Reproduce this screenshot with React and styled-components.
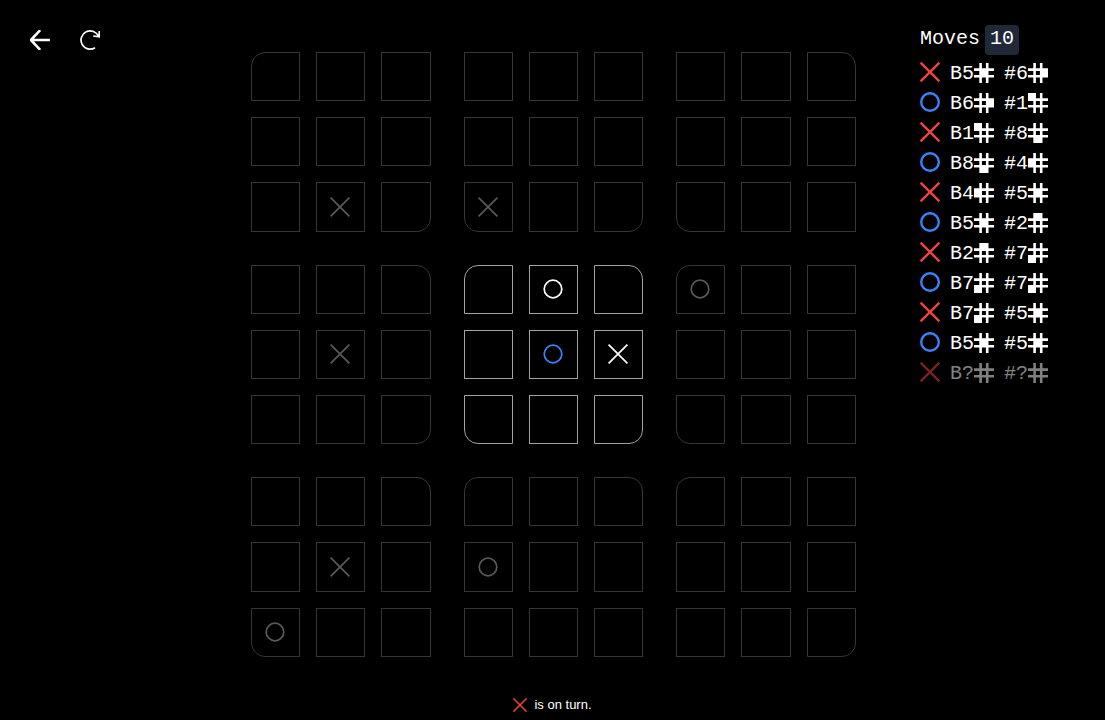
import React from "react";
import styled, { createGlobalStyle } from "styled-components";

const GlobalStyle = createGlobalStyle`
    * {
        box-sizing: border-box;
    }

    body {
        margin: 0;
        background: #000;
        color: #fff;
        font-family: "Liberation Sans", Arial, sans-serif;
    }
`;

const Page = styled.div`
    min-height: 100vh;
    display: grid;
    grid-template-columns: 1fr auto 1fr;
    grid-template-rows: 1fr auto;
`;

const Toolbar = styled.nav`
    display: flex;
    align-items: flex-start;
    gap: 30px;
    padding: 30px;
`;

const IconButton = styled.button`
    display: flex;
    width: 20px;
    height: 20px;
    padding: 0;
    border: 0;
    background: none;
    color: #fff;
    cursor: pointer;
`;

const Icon = styled.svg`
    display: block;
    flex: none;
    width: ${props => props.$size || 20}px;
    height: ${props => props.$size || 20}px;
    overflow: hidden;
    fill: none;
    stroke: ${props => props.$color || "currentColor"};
    stroke-width: ${props => props.$weight || 2};
`;

const BoardGrid = styled.main`
    width: 84vh;
    height: 84vh;
    margin: 52px 0 0 2px;
    display: grid;
    grid-template-columns: repeat(3, 1fr);
    grid-template-rows: repeat(3, 1fr);
    gap: 33px;
`;

const SmallBoard = styled.section`
    display: grid;
    grid-template-columns: repeat(3, 1fr);
    grid-template-rows: repeat(3, 1fr);
    gap: 16px;
    color: ${props => props.$active ? "#fff" : "#595959"};
`;

const Cell = styled.button`
    display: flex;
    align-items: center;
    justify-content: center;
    min-width: 0;
    padding: 0 1px 0 0;
    border: 1px solid ${props => props.$active ? "#a3a3a3" : "#363636"};
    border-radius: ${props => props.$radius};
    background: none;
    color: inherit;
`;

const Sidebar = styled.aside`
    justify-self: end;
    width: 185px;
    padding-top: 25px;
    font-family: "Liberation Mono", monospace;
    font-size: 20px;
    line-height: 23px;
`;

const Title = styled.h1`
    display: flex;
    gap: 5px;
    margin: 0;
    font-size: 20px;
    font-weight: normal;
    line-height: 23px;
`;

const TitleText = styled.span`
    padding-top: 2px;
`;

const Count = styled.span`
    padding: 2px 5px 5px;
    border-radius: 4px;
    background: #1f2937;
`;

const MoveList = styled.ol`
    margin: 2px 0 0;
    padding: 0;
    list-style: none;
`;

const Move = styled.li`
    display: flex;
    align-items: center;
    gap: 10px;
    height: 30px;
    opacity: ${props => props.$pending ? 0.5 : 1};
`;

const Position = styled.span`
    display: flex;
    align-items: center;
    padding-top: 2px;
`;

const Status = styled.footer`
    grid-column: 1 / -1;
    display: flex;
    align-items: center;
    justify-content: center;
    gap: 7px;
    padding-bottom: 7px;
    font-size: 13px;
    line-height: 16px;
`;

const RED = "#ef4444";
const BLUE = "#3b82f6";

// [board, cell], both counted from 1
const moves = [
    [5, 6], [6, 1], [1, 8], [8, 4], [4, 5],
    [5, 2], [2, 7], [7, 7], [7, 5], [5, 5]
];

// marks on the board, keyed by board and cell
const marks = {
    "1-8": "x",
    "2-7": "x",
    "4-5": "x",
    "5-2": "o",
    "5-5": "o",
    "5-6": "x",
    "6-1": "o",
    "7-5": "x",
    "7-7": "o",
    "8-4": "o"
};

const numbers = [1, 2, 3, 4, 5, 6, 7, 8, 9];
const activeBoard = 5;
const corners = [1, 3, 9, 7];

// the outer corners of the whole grid, and those facing the middle board
const roundCorners = {
    1: [1, 9],
    2: [7, 9],
    3: [3, 7],
    4: [3, 9],
    5: [1, 3, 7, 9],
    6: [1, 7],
    7: [3, 7],
    8: [1, 3],
    9: [1, 9]
};

const radius = (board, cell) => corners.map(corner =>
    corner === cell && roundCorners[board].includes(cell) ? "14px" : "0"
).join(" ");

const Mark = ({ type, ...rest }) => (
    <Icon viewBox="0 0 20 20" aria-hidden="true" {...rest}>
        {type === "x"
            ? <path d="M0.6 0.6 19.4 19.4M19.4 0.6 0.6 19.4" />
            : <circle cx="10" cy="10" r="8.8" />}
    </Icon>
);

const Hash = ({ cell }) => {
    const column = (cell - 1) % 3;
    const row = Math.floor((cell - 1) / 3);
    return (
        <Icon viewBox="0 0 20 20" $weight={2.6} aria-hidden="true">
            <path d="M6.6 0V20M13.2 0V20M0 6.6H20M0 13.2H20" />
            {cell && (
                <rect x={column * 6} y={row * 6} width="8" height="8" fill="currentColor" stroke="none" />
            )}
        </Icon>
    );
};

const MoveRow = ({ index, board, cell }) => {
    const type = index % 2 ? "o" : "x";
    return (
        <Move $pending={!board}>
            <Mark type={type} $weight={2.4} $color={type === "x" ? RED : BLUE} />
            <Position>B{board || "?"}<Hash cell={board} /></Position>
            <Position>#{cell || "?"}<Hash cell={cell} /></Position>
        </Move>
    );
};

const Board = ({ board }) => {
    const active = board === activeBoard;
    return (
        <SmallBoard $active={active} aria-label={`Board ${board}`}>
            {numbers.map(cell => {
                const type = marks[`${board}-${cell}`];
                const last = active && cell === 5;
                return (
                    <Cell
                        key={cell}
                        type="button"
                        $active={active}
                        $radius={radius(board, cell)}
                        aria-label={`Cell ${cell}`}
                    >
                        {type && <Mark type={type} $weight={1.7} $color={last ? BLUE : undefined} />}
                    </Cell>
                );
            })}
        </SmallBoard>
    );
};

export default function App() {
    return (
        <>
            <GlobalStyle />
            <Page>
                <Toolbar>
                    <IconButton type="button" aria-label="Back">
                        <Icon viewBox="0 0 20 20" $weight={2.6}>
                            <path d="M20 10H1M10.2 0.2 0.9 10 10.2 19.8" />
                        </Icon>
                    </IconButton>
                    <IconButton type="button" aria-label="Restart">
                        <Icon viewBox="0 0 20 20" $weight={1.7}>
                            <path d="M15 17.7A9.1 9.1 0 1 1 18.6 6.7M19.2 1V6.8L13.2 6" />
                        </Icon>
                    </IconButton>
                </Toolbar>
                <BoardGrid>
                    {numbers.map(board => <Board key={board} board={board} />)}
                </BoardGrid>
                <Sidebar>
                    <Title>
                        <TitleText>Moves</TitleText>
                        <Count>{moves.length}</Count>
                    </Title>
                    <MoveList>
                        {moves.map(([board, cell], index) => (
                            <MoveRow key={index} index={index} board={board} cell={cell} />
                        ))}
                        <MoveRow index={moves.length} />
                    </MoveList>
                </Sidebar>
                <Status>
                    <Mark type="x" $size={14} $weight={2.2} $color={RED} />
                    is on turn.
                </Status>
            </Page>
        </>
    );
}
